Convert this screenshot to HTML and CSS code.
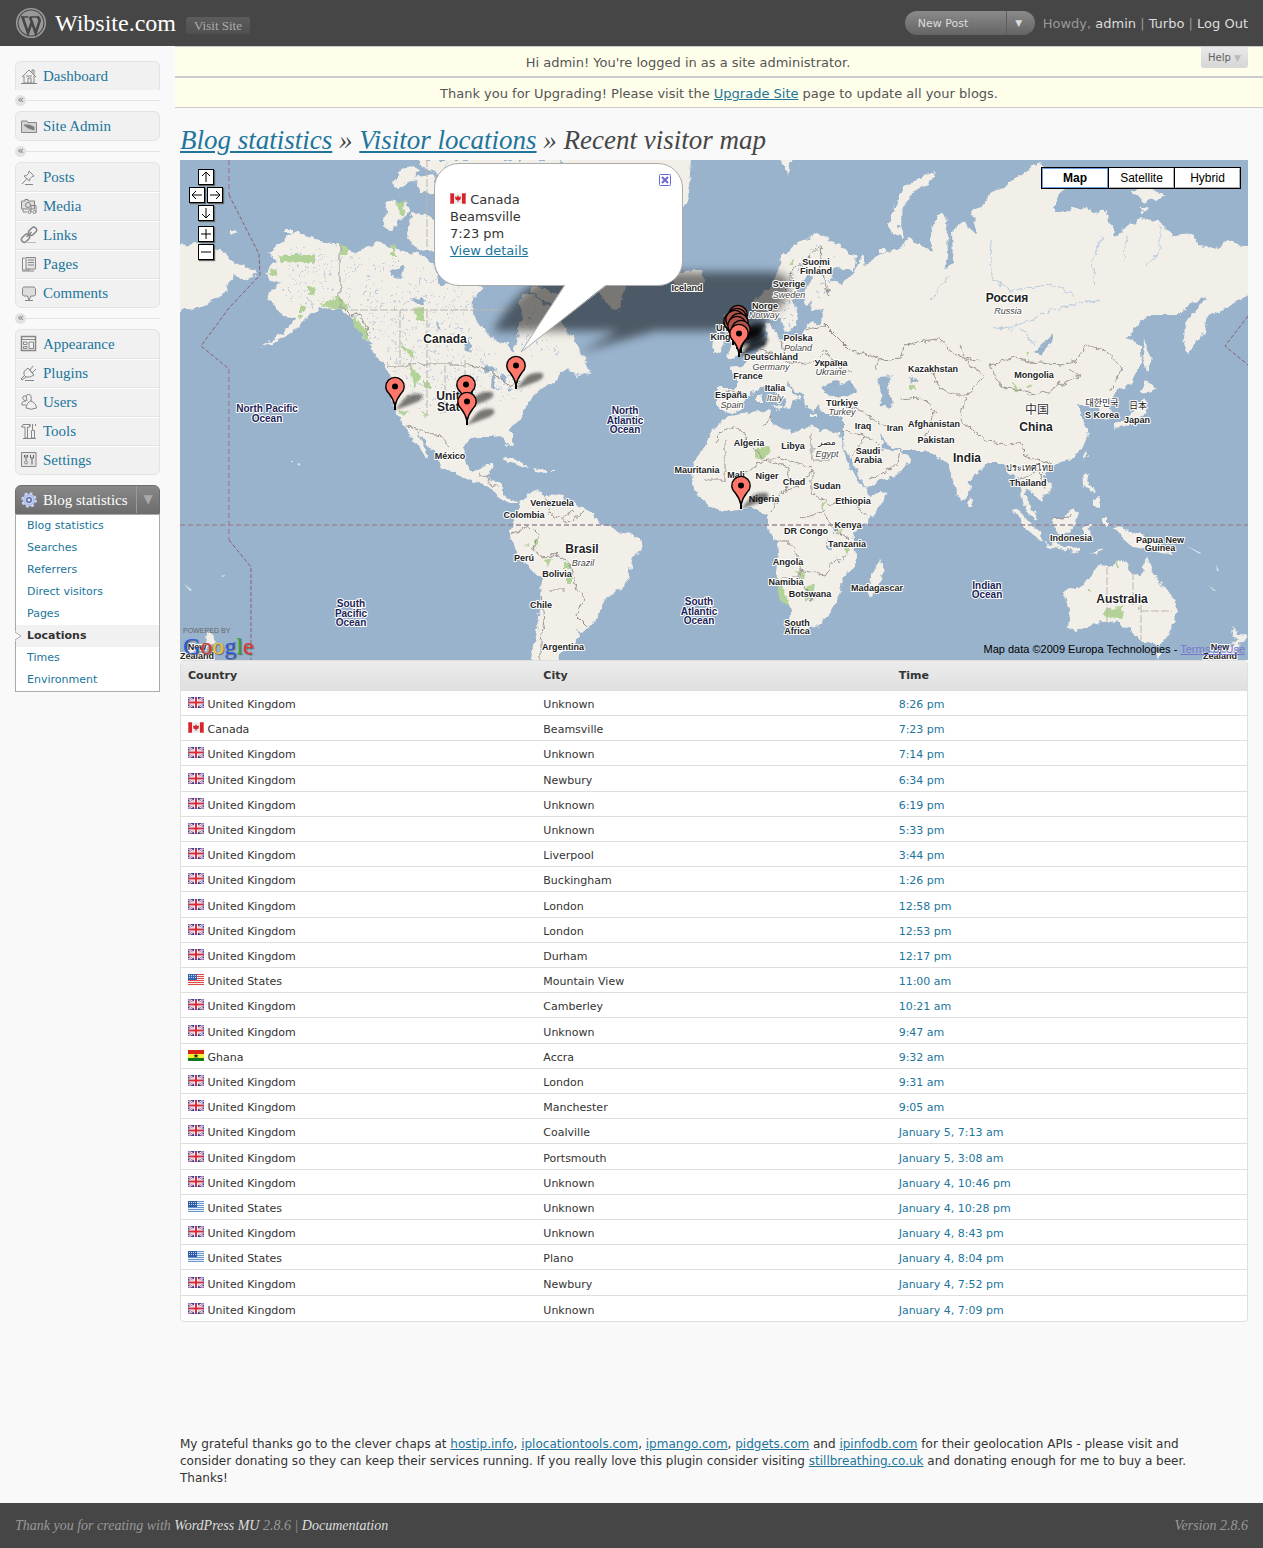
FILE: index.html
```html
<!DOCTYPE html>
<html lang="en">
<head>
<meta charset="utf-8">
<title>Wibsite.com - Recent visitor map</title>
<link rel="stylesheet" href="styles.css">
</head>
<body>

<!-- shared symbols -->
<svg class="defs" aria-hidden="true">
  <symbol id="gb" viewBox="0 0 16 11">
    <rect width="16" height="11" fill="#35479a"/>
    <path d="M0 0L16 11M16 0L0 11" stroke="#f4f0f8" stroke-width="2.4"/>
    <path d="M0 0L16 11M16 0L0 11" stroke="#d8606e" stroke-width=".9"/>
    <path d="M8 0V11M0 5.500H16" stroke="#fff" stroke-width="4"/>
    <path d="M8 0V11M0 5.500H16" stroke="#d42c3c" stroke-width="2"/>
    <rect x=".5" y=".5" width="15" height="10" fill="none" stroke="#35479a" stroke-opacity=".3"/>
  </symbol>
  <symbol id="ca" viewBox="0 0 16 11">
    <rect width="16" height="11" fill="#f1ecec"/>
    <path d="M0 0H4V11H0zM12 0H16V11H12z" fill="#d8232a"/>
    <path d="M8 2L9 4L11 3.500L10.500 6.500L8.400 7.500V9H7.600V7.500L5.500 6.500L5 3.500L7 4z" fill="#d8232a"/>
    <rect x=".5" y=".5" width="15" height="10" fill="none" stroke="#fff" stroke-opacity=".3"/>
  </symbol>
  <symbol id="us" viewBox="0 0 16 11">
    <rect width="16" height="11" fill="#fbeeee"/>
    <path d="M0 .5H16M0 2.500H16M0 4.500H16M0 6.500H16M0 8.500H16M0 10.500H16" stroke="#dd4a48"/>
    <rect width="9" height="6" fill="#3564b4"/>
    <path d="M1 1.500H9M1 3.500H9" stroke="#c5d5f0" stroke-dasharray="1 1"/>
  </symbol>
  <symbol id="um" viewBox="0 0 16 11">
    <rect width="16" height="11" fill="#e6eef8"/>
    <path d="M0 .5H16M0 2.500H16M0 4.500H16M0 6.500H16M0 8.500H16M0 10.500H16" stroke="#6b96cc"/>
    <rect width="9" height="6" fill="#2f5ba8"/>
    <path d="M1 1.500H9M1 3.500H9" stroke="#c5d5f0" stroke-dasharray="1 1"/>
  </symbol>
  <symbol id="gh" viewBox="0 0 16 11">
    <rect width="16" height="4" fill="#dc2418"/>
    <rect y="4" width="16" height="4" fill="#f4ee2c"/>
    <rect y="8" width="16" height="3" fill="#137a1c"/>
    <path d="M8 3.500L8.800 5.300H10.500L9.200 6.400L9.700 8L8 7L6.300 8L6.800 6.400L5.500 5.300H7.200z" fill="#222"/>
  </symbol>
  <symbol id="marker" viewBox="0 0 44 36" overflow="visible">
    <path d="M10 34L20 22Q26 17 36 18Q40 22 32 26Q22 30 10 34z" fill="#000" fill-opacity=".5" filter="url(#soft)"/>
    <path d="M10 34V30Q8.500 23 4 17.500A9.200 9.200 0 1 1 16 17.500Q11.500 23 10 30z" fill="#ff776b" stroke="#000" stroke-width="1.400"/>
    <path d="M10 27V34" stroke="#000" stroke-width="2"/>
    <circle cx="10" cy="10.500" r="3" fill="#000"/>
  </symbol>
</svg>

<header class="topbar">
  <svg class="wp-logo" viewBox="0 0 32 32" aria-hidden="true">
    <circle cx="16" cy="16" r="14.300" fill="#464646" stroke="#999" stroke-width="1.600"/>
    <circle cx="16" cy="16" r="12.400" fill="#999"/>
    <path d="M6 10H13.500M15 10H23" stroke="#464646" stroke-width="1.500"/>
    <path d="M7.500 10L13 26L16.800 15L15 10M16.800 15L20.700 26L24.500 14.500Q25 12 22.500 9.500" fill="none" stroke="#464646" stroke-width="2.600"/>
  </svg>
  <a class="site-name" href="#">Wibsite.com</a>
  <a class="visit" href="#">Visit Site</a>
  <div class="new-post">
    <button type="button" class="new-main">New Post</button>
    <button type="button" class="new-more" aria-label="More actions">▼</button>
  </div>
  <p class="howdy">Howdy, <a href="#">admin</a> | <a href="#">Turbo</a> | <a href="#">Log Out</a></p>
</header>

<div class="wrap">
  <nav class="menu" aria-label="Administration">
    <ul class="group open">
      <li><a href="#"><svg viewBox="0 0 18 18"><path d="M2 10L9 3L16 10M4 9V16H14V9M12 6V3H14V8M8 16V11H11V16M1 16.500H17M6 9H12"/></svg>Dashboard</a></li>
    </ul>
    <div class="fold"><span>«</span></div>
    <ul class="group">
      <li><a href="#"><svg viewBox="0 0 18 18"><path d="M1.500 4H7L8 5.500H16.500V15.500H1.500z" fill="#d4d4d4"/><path d="M4 8L8 11L14 13V10L9 8z" fill="#777"/></svg>Site Admin</a></li>
    </ul>
    <div class="fold"><span>«</span></div>
    <ul class="group">
      <li><a href="#"><svg viewBox="0 0 18 18"><path d="M9 3L14 8L12 8.500L10 10.500L9.500 13L4 8L6.500 7.500L8.500 5.500zM7 10.500L2 16M5 16.500H13"/></svg>Posts</a></li>
      <li><a href="#"><svg viewBox="0 0 18 18"><path d="M1.500 4H5V2.500H8V4H14.500V12H1.500z" fill="#ddd"/><circle cx="8" cy="8" r="2.500"/><path d="M11 8V15M11 8.500H16V15M3 12V15H7"/><circle cx="9.500" cy="15" r="1.500"/><circle cx="14.500" cy="15" r="1.500"/></svg>Media</a></li>
      <li><a href="#"><svg viewBox="0 0 18 18"><g stroke-width="1.500"><rect x="8" y="2.500" width="9" height="5.500" rx="2.700" transform="rotate(-45 12.500 5.200)"/><rect x="1" y="9.500" width="9" height="5.500" rx="2.700" transform="rotate(-45 5.500 12.200)"/><path d="M6.500 11L11.500 6"/></g><path d="M7 16.500H16" stroke="#bbb"/></svg>Links</a></li>
      <li><a href="#"><svg viewBox="0 0 18 18"><path d="M5 3H2.500V15H9V14"/><path d="M6 2.500H15.500V14H6z" fill="#e4e4e4"/><path d="M8 5H14M8 7.500H14M8 10H14M2 16H14"/></svg>Pages</a></li>
      <li><a href="#"><svg viewBox="0 0 18 18"><path d="M3.500 3H14L15.500 4.500V11L14 12H11L9 16L7.500 12H4L2.500 11V4.500z" fill="#ddd"/><path d="M5 16.500H13"/></svg>Comments</a></li>
    </ul>
    <div class="fold"><span>«</span></div>
    <ul class="group">
      <li><a href="#"><svg viewBox="0 0 18 18"><path d="M1.500 1.500H15.500V15.500H1.500z" stroke-width="1.500"/><path d="M2 4.500H15M3.500 7H7V9.500H3.500zM3.500 11.500H7V13.500H3.500zM9 7H13.500V13.500H9z"/></svg>Appearance</a></li>
      <li><a href="#"><svg viewBox="0 0 18 18"><path d="M8 4L14 11L10 13H6L4 11V7.500zM10 6L13 2M12 9L16 5M4 12L1 15L2 16L6 13M9 5L13 10M5 16.500H14"/></svg>Plugins</a></li>
      <li><a href="#"><svg viewBox="0 0 18 18"><path d="M7 8Q5 1 8.500 1.500Q12 1 11 8M6 8Q3 7 2.500 5Q3 2 6 3M6 8Q1 8 2 12H6M11 8Q16 10 16.500 15Q11 17.500 6 15Q7 9 11 8z"/></svg>Users</a></li>
      <li><a href="#"><svg viewBox="0 0 18 18"><path d="M1.500 5L3 2.500H10V5H7.500V16H5V5zM12.500 2V8M12.500 8.500H14.500V16H11.500V8.500zM10 2V4M15.500 2V4M3 16.500H16"/></svg>Tools</a></li>
      <li><a href="#"><svg viewBox="0 0 18 18"><path d="M1.500 1.500H16V15.500H1.500z" fill="#e4e4e4"/><path d="M6 4V9.500M4.500 4V6.500M7.500 4V6.500M12 7V13.500M10.500 4V7H13.500V4" stroke="#666"/><circle cx="6" cy="11.500" r="1.500"/></svg>Settings</a></li>
    </ul>
    <div class="current">
      <a href="#" class="current-link"><svg viewBox="0 0 18 18"><circle cx="9" cy="9" r="6.300" fill="#bfcdf0" stroke="#c9d5f6" stroke-width="3" stroke-dasharray="2.500 2.450"/><circle cx="9" cy="9" r="5" fill="#c3d0f2" stroke="#a5b4e0"/><circle cx="9" cy="9" r="2.200" fill="#dfe6fa" stroke="#5f6ca4" stroke-width="1.500"/></svg>Blog statistics</a>
      <button type="button" aria-label="Collapse menu">▼</button>
    </div>
    <ul class="sub">
      <li><a href="#">Blog statistics</a></li>
      <li><a href="#">Searches</a></li>
      <li><a href="#">Referrers</a></li>
      <li><a href="#">Direct visitors</a></li>
      <li><a href="#">Pages</a></li>
      <li class="here"><svg viewBox="0 0 8 10"><path d="M0 0L6 5L0 10z" fill="#f9f9f9"/><path d="M0 1L6 5L0 9" fill="none" stroke="#aaa"/></svg><a href="#">Locations</a></li>
      <li><a href="#">Times</a></li>
      <li><a href="#">Environment</a></li>
    </ul>
  </nav>

  <main class="body">
    <div class="notices">
      <p class="notice first">Hi admin! You're logged in as a site administrator.</p>
      <p class="notice">Thank you for Upgrading! Please visit the <a href="#">Upgrade Site</a> page to update all your blogs.</p>
      <button type="button" class="help">Help <span>▼</span></button>
    </div>

    <div class="content">
      <h1><a href="#">Blog statistics</a> » <a href="#">Visitor locations</a> » Recent visitor map</h1>

      <section class="map" aria-label="Visitor map">
        <svg class="world" viewBox="180 160 1068 500" preserveAspectRatio="xMidYMid slice">
          <defs>
            <filter id="coast" x="-5%" y="-5%" width="110%" height="110%">
              <feTurbulence type="fractalNoise" baseFrequency=".13" numOctaves="3" seed="4"/>
              <feDisplacementMap in="SourceGraphic" scale="8" xChannelSelector="R" yChannelSelector="G"/>
            </filter>
            <filter id="scatter" x="-5%" y="-5%" width="110%" height="110%">
              <feTurbulence type="fractalNoise" baseFrequency=".08" numOctaves="3" seed="9"/>
              <feDisplacementMap in="SourceGraphic" scale="26" xChannelSelector="R" yChannelSelector="G"/>
            </filter>
            <filter id="soft" x="-30%" y="-30%" width="160%" height="160%"><feGaussianBlur stdDeviation="1.500"/></filter>
            <filter id="softer" x="-30%" y="-30%" width="160%" height="160%"><feGaussianBlur stdDeviation="5"/></filter>
            <pattern id="lakes" width="26" height="23" patternUnits="userSpaceOnUse">
              <path d="M2 3l3 2M9 1l1 4M14 8l4-1M22 4l2 3M4 12l2-2M10 15l3 2M18 18l1-3M24 14l1 1M3 20l3-1M12 21l2 1M8 9l1 1" stroke="#a9c0da" stroke-width="1"/>
            </pattern>
            <clipPath id="frame"><rect x="180" y="160" width="1068" height="500"/></clipPath>
          </defs>
          <rect x="180" y="160" width="1068" height="500" fill="#99b3cc"/>

          <g clip-path="url(#frame)">
          <g fill="#f2efe9" filter="url(#coast)">
            <!-- Chukotka -->
            <path d="M170 245L200 244L213 247L225 253L235 263L247 267L257 271L252 278L243 282L235 275L227 282L228 292L217 297L205 305L197 309L187 308L170 318z"/>
            <!-- North and Central America -->
            <path d="M295 232L280 242L268 252L277 262L265 273L270 280L280 282L270 292L268 300L277 310L283 317L295 318L290 327L277 336L262 347L280 339L295 330L310 315L323 308L340 310L350 315L357 325L363 337L370 345L377 357L388 369L391 382L390 395L393 407L397 417L407 429L413 440L428 459L426 450L420 438L417 430L427 443L437 458L443 468L457 475L470 479L480 483L493 490L502 500L512 503L519 503L510 499L503 493L503 483L492 480L485 477L492 468L494 463L485 463L482 470L472 472L465 463L464 450L468 440L480 437L493 437L503 436L508 447L513 448L512 438L510 430L520 420L525 410L530 401L532 398L542 388L557 382L558 372L568 368L577 377L590 374L587 363L582 357L580 348L577 342L567 332L562 322L553 312L543 302L537 296L522 295L518 302L522 315L518 332L515 343L513 355L508 344L493 339L480 325L472 315L473 298L484 288L470 283L440 284L433 265L420 253L407 252L393 248L377 241L367 247L353 252L340 245L327 243L313 238z"/>
            <!-- Arctic islands -->
            <path d="M388 200L407 203L410 210L398 222L392 232L383 225zM412 212L427 215L440 225L440 252L417 250L407 238zM393 182L402 170L412 165L420 168L413 180L399 188zM413 178L434 174L438 196L420 192zM418 160H445V175L424 168zM445 160H560V200L520 230L470 250L450 240z"/>
            <path d="M535 284L563 298L570 310L556 309L545 300L530 292z"/>
            <!-- Greenland, Iceland -->
            <path d="M560 155H691L690 175L687 200L668 232L640 262L625 287L619 311L605 303L595 285L585 240L575 190z"/>
            <path d="M673 280L680 271L700 270L703 280L695 289L678 289z"/>
            <!-- South America -->
            <path d="M520 503L527 495L538 491L547 495L563 497L573 502L583 508L593 513L600 525L612 528L623 533L640 538L643 547L632 560L630 572L623 588L612 593L605 601L600 612L593 622L587 631L577 630L578 637L573 647L558 653L557 670H530L532 653L537 633L538 617L541 597L542 578L527 567L518 553L510 537L512 525z"/>
            <!-- Caribbean -->
            <path d="M502 461L512 457L531 467L524 467L510 462zM532 468L545 470L545 473L533 472zM550 471H555V473H550z"/>
            <!-- Africa -->
            <path d="M733 415L750 413L770 411L772 423L785 430L797 433L803 427L813 428L838 433L847 460L858 480L866 490L869 496L887 492L880 507L867 523L853 533L857 557L855 567L842 578L840 593L833 610L820 625L800 629L790 617L790 610L782 587L776 573L778 553L777 540L767 528L767 515L757 512L750 507L720 512L707 503L695 490L692 480L693 463L707 443L717 423z"/>
            <path d="M882 560L884 570L873 598L867 597L867 587L872 575zM970 497L974 505L969 507z"/>
            <!-- Europe and Asia -->
            <path d="M783 255L800 242L817 234L828 238L840 245L857 258L853 270L837 268L830 272L833 280L842 284L853 273L863 255L867 265L880 255L893 250L903 248L908 238L923 247L933 252L930 235L937 215L945 215L947 232L948 255L945 270L953 262L952 232L958 225L963 222L977 235L972 212L985 205L990 193L1007 185L1020 175L1030 168L1040 162L1047 175L1063 188L1060 195L1053 208L1060 212L1083 207L1093 213L1107 210L1108 222L1115 235L1127 227L1142 218L1160 222L1173 235L1193 233L1198 245L1217 248L1227 242L1260 249V293L1248 296L1233 302L1220 312L1208 315L1205 332L1193 348L1188 356L1184 338L1185 325L1193 312L1207 298L1190 302L1180 315L1147 315L1127 337L1140 345L1142 362L1130 385L1117 392L1107 400L1111 416L1104 420L1100 412L1097 402L1087 405L1077 405L1083 420L1088 433L1083 447L1070 460L1057 463L1047 467L1043 473L1052 488L1040 500L1032 492L1025 490L1027 503L1034 510L1038 521L1030 515L1023 503L1020 480L1010 473L1003 463L987 463L970 480L968 493L962 503L953 483L948 463L937 457L925 450L903 450L890 447L880 435L883 447L893 450L901 450L911 460L900 472L866 489L860 477L850 460L842 442L843 425L843 417L835 413L823 413L818 404L815 412L808 408L802 396L793 388L785 381L793 393L800 399L793 401L790 409L783 408L788 401L777 395L767 386L760 387L747 396L740 408L733 413L723 410L717 402L717 388L737 388L737 377L728 367L743 365L753 355L763 346L767 335L765 325L772 322L777 338L790 340L805 336L806 325L820 322L824 309L812 310L813 298L808 306L803 295L813 279L808 273L797 290L793 302L798 313L792 330L785 332L780 318L770 318L757 315L753 302L770 288L777 272z"/>
            <!-- British Isles -->
            <path d="M723 315L732 312L740 332L750 348L733 358L725 358L732 347L727 335zM713 340L723 337L722 350L712 352z"/>
            <!-- Arctic Russia, Svalbard -->
            <path d="M937 172L930 182L913 192L903 208L900 225L904 238L893 235L888 225L893 208L903 188L920 178zM780 158H793L788 175zM880 249H885V253H880zM1130 190L1150 188L1165 196L1145 202zM1140 205L1148 209L1144 214z"/>
            <path d="M285 230h8v3h-8zM229 230l7 0l-2 5l-5-1z"/>
            <!-- Mediterranean islands -->
            <path d="M771 404L782 406L780 411zM757 394H762V403H757zM810 414H817V417H810zM833 412H839V416H833z"/>
            <!-- Japan, Sakhalin, Taiwan -->
            <path d="M1145 380L1156 388L1147 394L1141 391zM1144 398L1148 405L1142 418L1133 424L1113 430L1113 424L1127 418L1138 407zM1144 340L1152 358L1147 372L1143 358zM1085 450L1088 455L1084 461z"/>
            <!-- South-east Asia -->
            <path d="M1083 471L1089 474L1088 485L1095 490L1091 492L1084 485zM1093 500L1100 497V508L1093 505zM1012 508L1020 512L1040 532L1041 542L1025 529zM1042 542L1078 549V553L1050 547zM1052 520L1062 519L1075 507L1079 513L1070 533L1056 532zM1083 527L1097 524L1088 530L1093 540L1086 535L1083 543zM1113 527L1121 526L1130 532L1157 539L1173 554L1160 553L1147 550L1133 547L1120 535zM1090 553L1101 549L1096 554zM1104 518h3v8h-3z"/>
            <!-- Australia, New Zealand -->
            <path d="M1065 592L1085 583L1097 568L1103 564L1112 567L1118 560L1128 562L1127 570L1142 577L1146 556L1152 572L1160 583L1170 593L1177 602L1174 620L1167 638L1157 645L1140 640L1131 630L1124 628L1113 621L1093 623L1075 632L1068 627L1070 613zM1153 653L1162 653L1159 661zM1231 628L1240 634L1248 637L1240 645L1230 655L1224 660L1230 646L1238 640zM208 630L216 643L203 650zM180 656L195 651L186 662z"/>
          </g>

          <g filter="url(#scatter)" opacity=".8">
            <path d="M295 244L282 255L287 265L282 290L295 308L340 305L375 340L395 370H500L470 325L475 292L430 270L400 260L350 258z" fill="url(#lakes)"/>
            <path d="M400 372H500L530 382L510 405L440 412L405 405zM528 303L565 345L540 362L522 350z" fill="url(#lakes)"/>
          </g>
          <path d="M757 318L800 260L820 240L812 262L790 330zM812 300L835 250V300z" fill="url(#lakes)"/>

          <!-- inland water -->
          <g fill="#99b3cc" filter="url(#coast)">
            <path d="M390 271L405 267L400 278L392 276zM412 300L422 296L425 304L412 304zM436 320l6 8l-4 1zM468 339l4 12l-5 1l-2-8z"/>
            <path d="M481 368L492 365L496 371L486 373zM492 375L496 373L495 388L491 387zM499 372L508 377L504 384zM505 389L514 386L510 391z"/>
            <path d="M821 388L833 380L842 384L850 381L858 392L845 396L832 396zM878 377L892 376L887 388L893 402L890 411L882 404L881 393zM910 376L917 378L911 385zM1035 352L1053 333L1052 342L1040 354zM833 524L839 527L834 533zM827 538l2 12h-2zM838 554l2 10h-2z"/>
          </g>

          <!-- forests and parks -->
          <g fill="#b3d298" filter="url(#coast)">
            <path d="M278 255L315 255V263L280 262zM266 273L277 269V276zM308 288L315 287V295L308 294zM320 305L338 296L350 310L340 310zM340 246H347V256L341 256zM396 202L406 201L402 215L397 210zM391 245h3v12h-3zM412 308L424 307V320H418zM350 315L368 330V342L357 330zM301 305h4v8h-4zM296 315l8 0l-4 6zM400 342L412 352L416 360L404 350zM411 365L420 378L414 388zM424 380h6v8h-6z"/>
            <path d="M398 408L410 412L402 415zM421 412l10 3l-5 2zM535 538h4v8h-4zM544 560L552 558L548 567zM563 564h8v5h-8zM566 577h6v7h-6zM524 545l4-2v5z"/>
            <path d="M756 448L768 447L770 453L762 460L755 459zM776 575L782 587L791 607L784 605L778 590zM796 570L806 572L803 580zM806 588L815 584L813 597L805 602zM843 548L850 546L848 555zM820 506l4-4v8zM839 530l5 1l-2 4z"/>
            <path d="M1013 383L1022 390L1015 393zM1024 384L1036 386L1026 388zM1024 353h4l-2 5zM1107 608L1122 607L1124 619L1107 618L1102 613zM1117 558l3 8h-3zM1087 590h4v3h-4zM788 262l8-2l-3 5zM1138 605l3 6h-3zM910 385h6v4h-6z"/>
          </g>

          <!-- borders -->
          <g fill="none" stroke="#97928e" stroke-width="1" filter="url(#coast)">
            <path d="M340 245V308L345 308L352 315L360 313L370 337M388 365H470L490 370L508 385L520 380M407 427L425 431L433 436L440 436L450 447M541 597L544 620L540 640V662M512 535L527 525L540 535L532 550L545 558L555 553L570 565L577 590L585 600L576 615L588 627M548 590L565 590M545 495L550 515L570 522L583 510M480 474l8 5l4 8l8 0M560 520l12-8M765 425L772 413M715 443L725 430L735 425L765 460L778 457L812 468M812 433V460H835M725 440V480H705M738 478L765 460L790 467L785 490L770 512M785 490L800 487L812 470V492L830 505L850 497L867 517M800 520L825 510L830 525L850 540M777 542H790L800 560V578H783M800 570L825 575L835 560L850 555M800 578L812 600L830 590M850 460L865 435L840 430M865 435L885 450M870 480L897 465L900 450"/>
            <path d="M875 370L880 360L900 358L905 345L940 338L955 355L980 360M920 370H930L940 388L955 395L968 395L985 375L970 365L960 345M990 365L1015 358L1030 362L1060 365L1075 362L1085 345L1105 350L1122 368L1110 390M990 365L1000 385L1040 395L1080 375L1070 368M965 398L960 420L985 440L1010 445L1020 440L1025 455L1050 463M900 400L920 398L935 410L925 435M843 405L860 410L890 430M783 298L793 270L808 258L820 245L822 270L829 295M805 330L825 325L850 350L880 358M760 350L785 360L810 365L825 350L835 365L850 372M745 395L728 390M780 340L785 355M1052 520L1068 518L1072 512M1147 533V550M1020 480L1040 470L1045 490"/>
          </g>
          <path d="M350 310H515M400 310V365M427 310V415M445 365V415M465 360V400M427 247V160M1107 567V623M1133 572V605M1141 605V640M1141 611H1172" fill="none" stroke="#bbb6b0" stroke-width="1" stroke-dasharray="8 2"/>
          <path d="M990 240L992 280L1010 290L1050 285L1075 295M1095 285L1092 260L1103 235M1125 260L1127 235M1160 225V250L1148 265M1010 330L1050 310L1100 300M930 300L950 275M995 330L1018 325L1035 345" fill="none" stroke="#b7cadd" stroke-width="1" filter="url(#coast)"/>

          <!-- equator and date line -->
          <g fill="none" stroke="#9c8797" stroke-width="1.500" stroke-dasharray="5 3">
            <path d="M180 525H1248M229 160V195M229 369V540"/>
          </g>
          <g fill="none" stroke="#87606a" stroke-width="1" stroke-dasharray="4 2">
            <path d="M229 195L259 254L260 275L229 308L201 346L229 369M229 540L251 567V660M1248 316L1225 346L1248 365"/>
          </g>
          <g fill="#dfe6e6">
            <path d="M297 464l3-1l0 3zM291 461h2v1h-2zM184 584l8 6l-2 1zM221 576l4-1l-1 2zM193 568l2 4zM1208 585l8 6l-2 0zM1216 565l3 6h-2zM1185 545l16 8l-1 1z"/>
          </g>

          <!-- shadow of the info bubble -->
          <path d="M493 330Q520 285 555 272H770Q800 275 785 300Q765 332 730 331H655L580 352L618 331H510Q495 332 493 330z" fill="#000" fill-opacity=".5" filter="url(#softer)"/>

          <!-- place names -->
          <g class="country">
            <text x="816" y="265">Suomi</text><text x="816" y="274">Finland</text>
            <text x="789" y="287">Sverige</text><text x="765" y="309">Norge</text>
            <text x="687" y="291">Iceland</text>
            <text x="730" y="331">United</text><text x="730" y="340">Kingdom</text>
            <text x="798" y="341">Polska</text><text x="771" y="360">Deutschland</text>
            <text x="748" y="379">France</text><text x="831" y="366">Україна</text>
            <text x="775" y="391">Italia</text><text x="731" y="398">España</text>
            <text x="842" y="406">Türkiye</text><text x="933" y="372">Kazakhstan</text>
            <text x="1034" y="378">Mongolia</text><text x="1102" y="418">S Korea</text>
            <text x="1137" y="423">Japan</text><text x="863" y="429">Iraq</text>
            <text x="895" y="431">Iran</text><text x="934" y="427">Afghanistan</text>
            <text x="936" y="443">Pakistan</text><text x="868" y="454">Saudi</text><text x="868" y="463">Arabia</text>
            <text x="749" y="446">Algeria</text><text x="793" y="449">Libya</text>
            <text x="697" y="473">Mauritania</text><text x="736" y="478">Mali</text>
            <text x="767" y="479">Niger</text><text x="794" y="485">Chad</text><text x="827" y="489">Sudan</text>
            <text x="764" y="502">Nigeria</text><text x="853" y="504">Ethiopia</text>
            <text x="806" y="534">DR Congo</text><text x="848" y="528">Kenya</text>
            <text x="847" y="547">Tanzania</text><text x="788" y="565">Angola</text>
            <text x="786" y="585">Namibia</text><text x="810" y="597">Botswana</text>
            <text x="877" y="591">Madagascar</text><text x="797" y="626">South</text><text x="797" y="634">Africa</text>
            <text x="450" y="459">México</text><text x="552" y="506">Venezuela</text>
            <text x="524" y="518">Colombia</text><text x="524" y="561">Perú</text>
            <text x="557" y="577">Bolivia</text><text x="541" y="608">Chile</text><text x="563" y="650">Argentina</text>
            <text x="1028" y="486">Thailand</text><text x="1071" y="541">Indonesia</text>
            <text x="1160" y="543">Papua New</text><text x="1160" y="551">Guinea</text>
            <text x="1220" y="650">New</text><text x="1220" y="659">Zealand</text>
            <text x="197" y="650">New</text><text x="197" y="659">Zealand</text>
          </g>
          <g class="country local">
            <text x="1029" y="471">ประเทศไทย</text><text x="1102" y="406">대한민국</text>
            <text x="1138" y="409">日本</text><text x="827" y="445">مصر</text>
          </g>
          <g class="country alt">
            <text x="789" y="298">Sweden</text><text x="764" y="318">Norway</text>
            <text x="798" y="351">Poland</text><text x="771" y="370">Germany</text>
            <text x="831" y="375">Ukraine</text><text x="775" y="401">Italy</text>
            <text x="732" y="408">Spain</text><text x="842" y="415">Turkey</text>
            <text x="827" y="457">Egypt</text><text x="1008" y="314">Russia</text><text x="583" y="566">Brazil</text>
          </g>
          <g class="country big">
            <text x="445" y="343">Canada</text><text x="455" y="400">United</text><text x="455" y="411">States</text>
            <text x="1007" y="302">Россия</text><text x="1036" y="431">China</text>
            <text x="967" y="462">India</text><text x="582" y="553">Brasil</text><text x="1122" y="603">Australia</text>
          </g>
          <text class="han" x="1037" y="414">中国</text>
          <g class="country ocean">
            <text x="267" y="412">North Pacific</text><text x="267" y="422">Ocean</text>
            <text x="625" y="414">North</text><text x="625" y="424">Atlantic</text><text x="625" y="433">Ocean</text>
            <text x="351" y="607">South</text><text x="351" y="617">Pacific</text><text x="351" y="626">Ocean</text>
            <text x="699" y="605">South</text><text x="699" y="615">Atlantic</text><text x="699" y="624">Ocean</text>
            <text x="987" y="589">Indian</text><text x="987" y="598">Ocean</text>
          </g>

          <!-- visitor markers -->
          <use href="#marker" x="385" y="376" width="44" height="36"/>
          <use href="#marker" x="456" y="374" width="44" height="36"/>
          <use href="#marker" x="457" y="391" width="44" height="36"/>
          <use href="#marker" x="506" y="355" width="44" height="36"/>
          <use href="#marker" x="731" y="475" width="44" height="36"/>
          <g class="dim">
            <use href="#marker" x="728" y="304" width="44" height="36"/>
            <use href="#marker" x="727" y="307" width="44" height="36"/>
            <use href="#marker" x="723" y="311" width="44" height="36"/>
            <use href="#marker" x="725" y="309" width="44" height="36"/>
            <use href="#marker" x="729" y="312" width="44" height="36"/>
            <use href="#marker" x="727" y="315" width="44" height="36"/>
            <use href="#marker" x="731" y="319" width="44" height="36"/>
          </g>
          <use href="#marker" x="729" y="323" width="44" height="36"/>
          </g>
        </svg>

        <div class="pan">
          <button type="button" class="up" aria-label="Pan up"><svg viewBox="0 0 14 14"><path d="M7 12V2M3 6L7 2L11 6"/></svg></button>
          <button type="button" class="left" aria-label="Pan left"><svg viewBox="0 0 14 14"><path d="M12 7H2M6 3L2 7L6 11"/></svg></button>
          <button type="button" class="right" aria-label="Pan right"><svg viewBox="0 0 14 14"><path d="M2 7H12M8 3L12 7L8 11"/></svg></button>
          <button type="button" class="down" aria-label="Pan down"><svg viewBox="0 0 14 14"><path d="M7 2V12M3 8L7 12L11 8"/></svg></button>
          <button type="button" class="in" aria-label="Zoom in"><svg viewBox="0 0 14 14"><path d="M7 2V12M2 7H12"/></svg></button>
          <button type="button" class="out" aria-label="Zoom out"><svg viewBox="0 0 14 14"><path d="M2 7H12"/></svg></button>
        </div>

        <div class="types">
          <button type="button" class="on">Map</button><button type="button">Satellite</button><button type="button">Hybrid</button>
        </div>

        <div class="bubble">
          <button type="button" class="close" aria-label="Close"><svg viewBox="0 0 12 12"><rect x=".5" y=".5" width="11" height="11" rx="1" fill="#fff" stroke="#6a68d4"/><path d="M3 3L9 9M9 3L3 9" stroke="#6a68d4" stroke-width="2"/></svg></button>
          <p><svg class="flag"><use href="#ca"/></svg> Canada</p>
          <p>Beamsville</p>
          <p>7:23 pm</p>
          <p><a href="#">View details</a></p>
          <svg class="tail" viewBox="0 0 90 70"><path d="M46 0L2 68L88 0z" fill="#fff"/><path d="M46 1L2 68L88 1" fill="none" stroke="#aaa"/></svg>
        </div>

        <div class="powered">
          <span>POWERED BY</span>
          <b><i class="b">G</i><i class="r">o</i><i class="y">o</i><i class="b">g</i><i class="g">l</i><i class="r">e</i></b>
        </div>
        <p class="credit">Map data ©2009 Europa Technologies - <a href="#">Terms of Use</a></p>
      </section>

      <table class="visits">
        <thead><tr><th>Country</th><th>City</th><th>Time</th></tr></thead>
        <tbody>
          <tr><td><svg class="flag"><use href="#gb"/></svg> United Kingdom</td><td>Unknown</td><td><a href="#">8:26 pm</a></td></tr>
          <tr><td><svg class="flag"><use href="#ca"/></svg> Canada</td><td>Beamsville</td><td><a href="#">7:23 pm</a></td></tr>
          <tr><td><svg class="flag"><use href="#gb"/></svg> United Kingdom</td><td>Unknown</td><td><a href="#">7:14 pm</a></td></tr>
          <tr><td><svg class="flag"><use href="#gb"/></svg> United Kingdom</td><td>Newbury</td><td><a href="#">6:34 pm</a></td></tr>
          <tr><td><svg class="flag"><use href="#gb"/></svg> United Kingdom</td><td>Unknown</td><td><a href="#">6:19 pm</a></td></tr>
          <tr><td><svg class="flag"><use href="#gb"/></svg> United Kingdom</td><td>Unknown</td><td><a href="#">5:33 pm</a></td></tr>
          <tr><td><svg class="flag"><use href="#gb"/></svg> United Kingdom</td><td>Liverpool</td><td><a href="#">3:44 pm</a></td></tr>
          <tr><td><svg class="flag"><use href="#gb"/></svg> United Kingdom</td><td>Buckingham</td><td><a href="#">1:26 pm</a></td></tr>
          <tr><td><svg class="flag"><use href="#gb"/></svg> United Kingdom</td><td>London</td><td><a href="#">12:58 pm</a></td></tr>
          <tr><td><svg class="flag"><use href="#gb"/></svg> United Kingdom</td><td>London</td><td><a href="#">12:53 pm</a></td></tr>
          <tr><td><svg class="flag"><use href="#gb"/></svg> United Kingdom</td><td>Durham</td><td><a href="#">12:17 pm</a></td></tr>
          <tr><td><svg class="flag"><use href="#us"/></svg> United States</td><td>Mountain View</td><td><a href="#">11:00 am</a></td></tr>
          <tr><td><svg class="flag"><use href="#gb"/></svg> United Kingdom</td><td>Camberley</td><td><a href="#">10:21 am</a></td></tr>
          <tr><td><svg class="flag"><use href="#gb"/></svg> United Kingdom</td><td>Unknown</td><td><a href="#">9:47 am</a></td></tr>
          <tr><td><svg class="flag"><use href="#gh"/></svg> Ghana</td><td>Accra</td><td><a href="#">9:32 am</a></td></tr>
          <tr><td><svg class="flag"><use href="#gb"/></svg> United Kingdom</td><td>London</td><td><a href="#">9:31 am</a></td></tr>
          <tr><td><svg class="flag"><use href="#gb"/></svg> United Kingdom</td><td>Manchester</td><td><a href="#">9:05 am</a></td></tr>
          <tr><td><svg class="flag"><use href="#gb"/></svg> United Kingdom</td><td>Coalville</td><td><a href="#">January 5, 7:13 am</a></td></tr>
          <tr><td><svg class="flag"><use href="#gb"/></svg> United Kingdom</td><td>Portsmouth</td><td><a href="#">January 5, 3:08 am</a></td></tr>
          <tr><td><svg class="flag"><use href="#gb"/></svg> United Kingdom</td><td>Unknown</td><td><a href="#">January 4, 10:46 pm</a></td></tr>
          <tr><td><svg class="flag"><use href="#um"/></svg> United States</td><td>Unknown</td><td><a href="#">January 4, 10:28 pm</a></td></tr>
          <tr><td><svg class="flag"><use href="#gb"/></svg> United Kingdom</td><td>Unknown</td><td><a href="#">January 4, 8:43 pm</a></td></tr>
          <tr><td><svg class="flag"><use href="#um"/></svg> United States</td><td>Plano</td><td><a href="#">January 4, 8:04 pm</a></td></tr>
          <tr><td><svg class="flag"><use href="#gb"/></svg> United Kingdom</td><td>Newbury</td><td><a href="#">January 4, 7:52 pm</a></td></tr>
          <tr><td><svg class="flag"><use href="#gb"/></svg> United Kingdom</td><td>Unknown</td><td><a href="#">January 4, 7:09 pm</a></td></tr>
        </tbody>
      </table>

      <p class="thanks">My grateful thanks go to the clever chaps at <a href="#">hostip.info</a>, <a href="#">iplocationtools.com</a>, <a href="#">ipmango.com</a>, <a href="#">pidgets.com</a> and <a href="#">ipinfodb.com</a> for their geolocation APIs - please visit and consider donating so they can keep their services running. If you really love this plugin consider visiting <a href="#">stillbreathing.co.uk</a> and donating enough for me to buy a beer. Thanks!</p>
    </div>
  </main>
</div>

<footer class="foot">
  <p>Thank you for creating with <a href="#">WordPress MU</a> 2.8.6 | <a href="#">Documentation</a></p>
  <p>Version 2.8.6</p>
</footer>
</body>
</html>
```
FILE: styles.css
```css
* { box-sizing: border-box; }
body {
  margin: 0;
  min-height: 100vh;
  display: flex;
  flex-direction: column;
  background: #f9f9f9;
  color: #333;
  font: 13px/17px Verdana, "DejaVu Sans", sans-serif;
}
p, h1, ul { margin: 0; padding: 0; }
ul { list-style: none; }
a { color: #21759b; }
button { font: inherit; margin: 0; padding: 0; border: 0; background: none; cursor: pointer; }
.defs { position: absolute; width: 0; height: 0; }

/* header */
.topbar {
  display: flex;
  align-items: center;
  height: 46px;
  padding: 0 15px;
  background: #464646;
}
.wp-logo { width: 32px; height: 32px; margin-right: 8px; }
.site-name {
  color: #fff;
  font: 24px/32px Georgia, "Liberation Serif", serif;
  text-decoration: none;
}
.visit {
  margin: 4px auto 0 10px;
  padding: 0 8px;
  border-radius: 3px;
  background: linear-gradient(#5c5c5c, #505050);
  color: #aaa;
  font: 13px/17px Georgia, "Liberation Serif", serif;
  text-decoration: none;
}
.new-post {
  display: flex;
  width: 130px;
  height: 24px;
  margin-right: 8px;
  border-radius: 12px;
  background: linear-gradient(#8a8a8a, #646464);
  font-size: 11px;
}
.new-post button { color: #ddd; }
.new-main { flex: 1; padding: 0 13px; border-right: 1px solid #5c5c5c; text-align: left; }
.new-more { width: 28px; padding-right: 4px; font-size: 9px; }
.howdy { color: #999; }
.howdy a { color: #ddd; text-decoration: none; }

/* page frame */
.wrap { display: flex; flex: 1; }
.menu { flex: none; width: 145px; margin: 15px 15px 0; }
.body { flex: 1; min-width: 0; }

/* side menu */
.group {
  border: 1px solid #e3e3e3;
  border-radius: 6px;
  background: #f1f1f1;
}
.group.open { border-bottom: 0; border-radius: 6px 6px 0 0; }
.group li { height: 29px; border-top: 1px solid #fff; border-bottom: 1px solid #e3e3e3; }
.group li:first-child { border-top-color: transparent; }
.group li:last-child { height: 28px; border-bottom: 0; }
.group a, .current-link {
  display: flex;
  align-items: center;
  gap: 5px;
  height: 25px;
  padding-left: 4px;
  font: 15px/20px Georgia, "Liberation Serif", serif;
  text-decoration: none;
}
.menu a > svg { flex: none; width: 18px; height: 18px; fill: none; stroke: #868686; }
.fold { display: flex; align-items: center; height: 21px; }
.fold::after { content: ""; flex: 1; height: 1px; background: #e3e3e3; }
.fold span {
  width: 11px;
  height: 11px;
  border-radius: 50%;
  background: #e3e3e3;
  color: #777;
  font-size: 11px;
  line-height: 9px;
  text-align: center;
}
.current {
  display: flex;
  height: 29px;
  margin-top: 10px;
  border: 1px solid #6d6d6d;
  border-radius: 6px 6px 0 0;
  background: linear-gradient(#888, #6d6d6d);
}
.current-link { flex: 1; height: 27px; color: #fff; white-space: nowrap; }
.current button { width: 23px; border-left: 1px solid #999; color: #aaa; font-size: 12px; }
.sub { border: 1px solid #aaa; background: #fff; font-size: 11px; line-height: 22px; }
.sub li { position: relative; padding-left: 11px; }
.sub a { text-decoration: none; }
.sub .here { background: #f1f1f1; font-weight: bold; }
.sub .here a { color: #333; }
.here svg { position: absolute; left: -1px; top: 6px; width: 8px; height: 10px; }

/* notices */
.notices { position: relative; }
.notice {
  height: 31px;
  border: 1px solid #ccc;
  border-width: 1px 0;
  background: #fffeeb;
  color: #555;
  line-height: 31px;
  text-align: center;
}
.notice.first { padding-right: 62px; }
.help {
  position: absolute;
  top: 1px;
  right: 15px;
  width: 47px;
  height: 21px;
  border-radius: 0 0 3px 3px;
  background: linear-gradient(#e9e9e9, #d6d6d6);
  color: #606060;
  font-size: 10px;
}
.help span { color: #bbb; font-size: 9px; }

/* content */
.content { padding: 14px 15px 0 5px; }
h1 {
  height: 38px;
  color: #464646;
  font: italic 27px/36px Georgia, "Liberation Serif", serif;
}

/* map */
.map { position: relative; height: 500px; overflow: hidden; background: #99b3cc; }
.world { display: block; width: 100%; height: 100%; }
.world text { text-anchor: middle; font-family: Arial, "Liberation Sans", "Noto Sans CJK JP", "Noto Sans CJK KR", "DejaVu Sans", sans-serif; }
.country { font-size: 9px; font-weight: bold; fill: #222; stroke: #fff; stroke-width: 2px; stroke-linejoin: round; paint-order: stroke; }
.country.local { font-size: 9px; font-weight: normal; }
.country.alt { font-weight: normal; font-style: italic; fill: #444; }
.country.big { font-size: 12px; }
.country.ocean { font-size: 10px; fill: #1c2458; }
.han { font-size: 12px; fill: #333; stroke: #fff; stroke-width: 2px; paint-order: stroke; }
.dim { filter: brightness(.7); }

.pan {
  position: absolute;
  left: 9px;
  top: 9px;
  display: grid;
  grid-template: 18px 18px 21px 18px 18px / repeat(4, 9px);
}
.pan button { width: 16px; height: 16px; border: 1px solid #000; background: #fff; box-shadow: 1px 1px 1px #666; }
.pan svg { display: block; width: 14px; height: 14px; fill: none; stroke: #000; }
.up, .down, .in, .out { grid-column: 2 / 4; }
.up { grid-row: 1; }
.left { grid-area: 2 / 1 / 3 / 3; }
.right { grid-area: 2 / 3 / 3 / 5; }
.down { grid-row: 3; }
.in { grid-row: 4; }
.out { grid-row: 5; }

.types { position: absolute; top: 7px; right: 7px; display: flex; border: 1px solid #000; background: #000; gap: 1px; }
.types button {
  width: 65px;
  height: 20px;
  border: 1px solid #fff;
  border-color: #fff #b0b0b0 #b0b0b0 #fff;
  background: #fff;
  color: #000;
  font: 12px/18px Arial, "Liberation Sans", sans-serif;
}
.types .on { width: 66px; border-color: #6c9ddf; font-weight: bold; }

.bubble {
  position: absolute;
  left: 254px;
  top: 3px;
  width: 249px;
  height: 123px;
  padding: 27px 15px 0;
  border: 1px solid #aaa;
  border-radius: 25px;
  background: #fff;
}
.close { position: absolute; right: 11px; top: 10px; width: 12px; height: 12px; }
.close svg { display: block; }
.tail { position: absolute; left: 84px; top: 120px; width: 90px; height: 70px; }
.flag { width: 16px; height: 11px; }

.powered { position: absolute; left: 3px; bottom: 3px; color: #666; font: 7px/8px Arial, "Liberation Sans", sans-serif; }
.powered span { display: block; }
.powered b { display: block; font: 24px/22px "Liberation Serif", serif; text-shadow: 1px 1px 1px #666; }
.powered i { font-style: normal; }
.powered .b { color: #2a5bdc; }
.powered .r { color: #dc3a32; }
.powered .y { color: #ecc52c; }
.powered .g { color: #33a540; }
.credit { position: absolute; right: 3px; bottom: 2px; color: #000; font: 11px/17px Arial, "Liberation Sans", sans-serif; }
.credit a { color: #7777cc; }

/* visits */
.visits {
  width: 100%;
  table-layout: fixed;
  border: 1px solid #dfdfdf;
  border-radius: 4px;
  border-spacing: 0;
  background: #fff;
  font-size: 11px;
}
.visits th {
  height: 30px;
  padding: 0 7px;
  background: linear-gradient(#ececec, #dfdfdf);
  line-height: 30px;
  text-align: left;
}
.visits td { height: 25px; padding: 3px 7px 0; border-bottom: 1px solid #dfdfdf; line-height: 21px; }
.visits tr:nth-child(5n + 4) td { height: 26px; }
.visits tr:last-child td { border-bottom: 0; }
.visits a { text-decoration: none; }

.thanks { margin: 114px 0 16px; padding-right: 40px; font-size: 12px; }

/* footer */
.foot {
  display: flex;
  justify-content: space-between;
  align-items: center;
  height: 45px;
  padding: 0 15px;
  background: #464646;
  color: #999;
  font: italic 14px/17px Georgia, "Liberation Serif", serif;
}
.foot a { color: #ddd; text-decoration: none; }
```
